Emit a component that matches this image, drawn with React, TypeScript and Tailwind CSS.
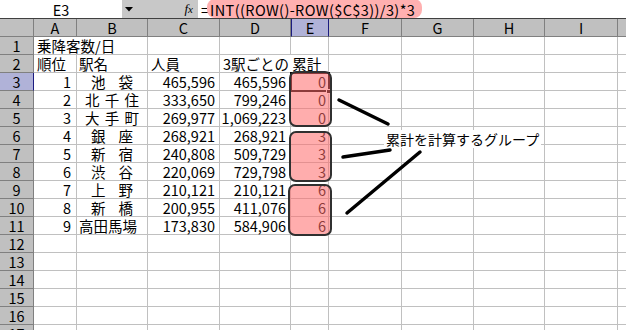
import React from 'react'

const COLS = 'grid-cols-[34px_43px_71px_72px_71px_38px_73px_72px_71px_73px_80px]'
const LETTERS = ['A', 'B', 'C', 'D', 'E', 'F', 'G', 'H', 'I', 'J']

const rows = [
  [1, '池袋', '465,596', '465,596', 0],
  [2, '北千住', '333,650', '799,246', 0],
  [3, '大手町', '269,977', '1,069,223', 0],
  [4, '銀座', '268,921', '268,921', 3],
  [5, '新宿', '240,808', '509,729', 3],
  [6, '渋谷', '220,069', '729,798', 3],
  [7, '上野', '210,121', '210,121', 6],
  [8, '新橋', '200,955', '411,076', 6],
  [9, '高田馬場', '173,830', '584,906', 6],
] as const

const cell = 'border-r border-b border-[#c0c0c0] bg-white text-black whitespace-nowrap'
const rowHead = 'border-r border-b border-[#808080] bg-[#c0c0c0] flex items-center justify-center'

function Station({ name }: { name: string }) {
  const pad = name.length === 2 ? 'pl-[14px] pr-[14px]' : name.length === 3 ? 'pl-[8px] pr-[8px]' : 'pl-[2px] pr-[10px]'
  return (
    <div className={`${cell} flex justify-between items-center ${pad}`}>
      {name.split('').map((c, i) => <span key={i}>{c}</span>)}
    </div>
  )
}

function Blank({ n }: { n: number }) {
  return <>{Array.from({ length: n }, (_, i) => <div key={i} className={cell} />)}</>
}

export default function App() {
  return (
    <div className="w-[626px] h-[330px] overflow-hidden bg-white text-black text-[14.5px] leading-[17px]" style={{ fontFamily: '"Noto Sans CJK JP", "Liberation Sans", sans-serif' }}>
      {/* formula bar */}
      <div className="flex h-[19px] border-b border-[#404040]">
        <div className="w-[122px] flex items-center justify-center bg-white">E3</div>
        <div className="w-[76px] flex items-center bg-[#c8c8c8]">
          <svg width="8" height="5" viewBox="0 0 8 5" className="ml-[3px]"><path d="M0 0h8L4 4.5z" fill="#000" /></svg>
          <span className="ml-auto mr-[5px] italic text-[13px]" style={{ fontFamily: '"Liberation Serif", serif' }}>f<span className="text-[11px]">x</span></span>
        </div>
        <div className="flex-1 flex items-center bg-white">
          <span className="pl-[3px]">=</span>
          <span className="-ml-[2px] w-[215px] h-[19px] -mt-[2px] pt-[2px] pl-[3px] bg-[#ffb0b0] rounded-[8px] flex items-center tracking-[0.4px]">INT((ROW()-ROW($C$3))/3)*3</span>
        </div>
      </div>

      {/* header row */}
      <div className={`grid ${COLS} h-[18px]`}>
        <div className="border-r border-b border-[#808080] bg-[#c0c0c0]" />
        {LETTERS.map(l => (
          <div key={l} className={l === 'E'
            ? 'border-x border-b border-x-[#1c1c80] border-b-[#808080] bg-[#b0b2d8] flex items-center justify-center'
            : 'border-r border-b border-[#808080] bg-[#c0c0c0] flex items-center justify-center'}>{l}</div>
        ))}
      </div>

      {/* sheet */}
      <div className="relative">
        <div className={`grid ${COLS} auto-rows-[18px]`}>
          <div className={rowHead}>1</div>
          <div className={`${cell} col-span-2 pl-[3px] flex items-center`}>乗降客数/日</div>
          <Blank n={8} />

          <div className={rowHead}>2</div>
          <div className={`${cell} pl-[3px] flex items-center`}>順位</div>
          <div className={`${cell} pl-[2px] flex items-center`}>駅名</div>
          <div className={`${cell} pl-[3px] flex items-center`}>人員</div>
          <div className={`${cell} col-span-2 pl-[3px] flex items-center`}>3駅ごとの 累計</div>
          <Blank n={5} />

          {rows.map((r, i) => (
            <React.Fragment key={r[0]}>
              <div className={i === 0 ? 'border-r border-b border-r-[#1c1c80] border-b-[#808080] bg-[#b0b2d8] flex items-center justify-center' : rowHead}>{i + 3}</div>
              <div className={`${cell} flex items-center justify-end pr-[5px]`}>{r[0]}</div>
              <Station name={r[1]} />
              <div className={`${cell} flex items-center justify-end pr-[4px]`}>{r[2]}</div>
              <div className={`${cell} flex items-center justify-end pr-[4px]`}>{r[3]}</div>
              <div className={`${cell} flex items-center justify-end pr-[2px]`}>{r[4]}</div>
              <Blank n={5} />
            </React.Fragment>
          ))}

          {[12, 13, 14, 15, 16, 17].map(n => (
            <React.Fragment key={n}>
              <div className={rowHead}>{n}</div>
              <Blank n={10} />
            </React.Fragment>
          ))}
        </div>

        {/* active cell E3 */}
        <div className="absolute left-[290px] top-[35px] w-[40px] h-[20px] border-2 border-black" />
        <div className="absolute left-[326px] top-[52px] w-[5px] h-[5px] bg-black border border-white" />

        {/* group boxes */}
        <div className="absolute left-[289px] top-[34px] w-[43px] h-[56px] rounded-[7px] border-2 border-[#303030] bg-[#ff6a6a]/55" />
        <div className="absolute left-[289px] top-[94px] w-[43px] h-[51px] rounded-[7px] border-2 border-[#303030] bg-[#ff6a6a]/55" />
        <div className="absolute left-[288px] top-[147px] w-[44px] h-[52px] rounded-[7px] border-2 border-[#303030] bg-[#ff6a6a]/55" />

        {/* callout */}
        <svg className="absolute left-0 top-0" width="626" height="293">
          <g stroke="#000" strokeWidth="3.5" strokeLinecap="round">
            <line x1="339" y1="63" x2="388" y2="87" />
            <line x1="343" y1="120" x2="390" y2="113" />
            <line x1="347" y1="176" x2="420" y2="115" />
          </g>
        </svg>
        <div className="absolute left-[384px] top-[93px] h-[18px] px-[2px] bg-white leading-[18px] text-[14px]">累計を計算するグループ</div>
      </div>
    </div>
  )
}
